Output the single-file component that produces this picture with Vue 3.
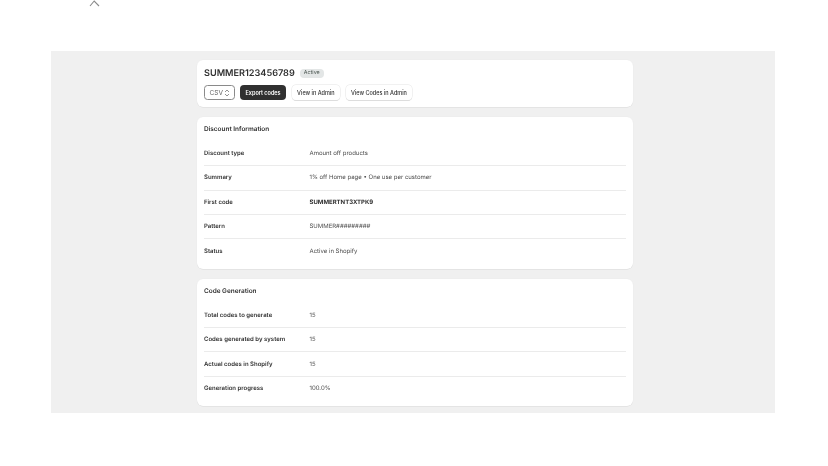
<template>
  <div class="page">
    <div class="topbar">
      <svg class="chevron" width="11" height="8" viewBox="0 0 11 8">
        <path d="M1 6 L5.2 1 L10 6" fill="none" stroke="#8a8a8a" stroke-width="1.1" />
      </svg>
    </div>
    <main class="content">
      <div class="column">
        <section class="card header-card">
          <div class="title-row">
            <h1 class="code">SUMMER123456789</h1>
            <span class="badge">Active</span>
          </div>
          <div class="actions">
            <button class="select">
              CSV
              <svg width="6" height="8" viewBox="0 0 6 8">
                <path d="M1 3 L3 1 L5 3 M1 5 L3 7 L5 5" fill="none" stroke="#616161" stroke-width="0.7" />
              </svg>
            </button>
            <button class="btn primary">Export codes</button>
            <button class="btn">View in Admin</button>
            <button class="btn">View Codes in Admin</button>
          </div>
        </section>

        <section v-for="card in cards" :key="card.title" class="card info-card">
          <h2 class="card-title">{{ card.title }}</h2>
          <div v-for="row in card.rows" :key="row.label" class="row">
            <span class="label">{{ row.label }}</span>
            <span class="value" :class="{ strong: row.strong }">{{ row.value }}</span>
          </div>
        </section>
      </div>
    </main>
  </div>
</template>

<script setup>
const cards = [
  {
    title: 'Discount Information',
    rows: [
      { label: 'Discount type', value: 'Amount off products' },
      { label: 'Summary', value: '1% off Home page • One use per customer' },
      { label: 'First code', value: 'SUMMERTNT3XTPK9', strong: true },
      { label: 'Pattern', value: 'SUMMER#########' },
      { label: 'Status', value: 'Active in Shopify' },
    ],
  },
  {
    title: 'Code Generation',
    rows: [
      { label: 'Total codes to generate', value: '15' },
      { label: 'Codes generated by system', value: '15' },
      { label: 'Actual codes in Shopify', value: '15' },
      { label: 'Generation progress', value: '100.0%' },
    ],
  },
]
</script>

<style>
html,
body {
  margin: 0;
  background: #fff;
}
</style>

<style scoped>
.page {
  width: 828px;
  height: 466px;
  overflow: hidden;
  font-family: Inter, 'Liberation Sans', sans-serif;
  color: #303030;
  text-rendering: geometricPrecision;
}

.topbar {
  height: 51px;
  padding-left: 89px;
}

.chevron {
  display: block;
}

.content {
  width: 724px;
  height: 362px;
  margin-left: 51px;
  padding-top: 9px;
  box-sizing: border-box;
  background: #f0f0f0;
}

.column {
  width: 436px;
  margin-left: 146px;
  display: flex;
  flex-direction: column;
  gap: 10px;
  will-change: transform;
}

.card {
  background: #fff;
  border-radius: 6px;
  box-shadow: 0 0.6px 0 #d9d9d9, 0 0 0 0.5px #ebebeb;
  padding: 0 7px;
}

.header-card {
  height: 47px;
  box-sizing: border-box;
  padding-top: 6.5px;
}

.title-row {
  display: flex;
  align-items: center;
  gap: 5px;
  height: 13px;
}

.code {
  margin: 0;
  font-size: 9.15px;
  line-height: 13px;
  font-weight: 600;
  color: #303030;
}

.badge {
  background: #e3e6e6;
  color: #4a5550;
  font-size: 5.4px;
  line-height: 9px;
  padding: 0 4px;
  border-radius: 4px;
}

.actions {
  display: flex;
  align-items: center;
  gap: 5.5px;
  margin-top: 5.5px;
}

.select {
  display: flex;
  align-items: center;
  gap: 1.5px;
  height: 15px;
  width: 30.5px;
  box-sizing: border-box;
  padding: 0 0 0 4.5px;
  background: #fff;
  border: 0.7px solid #8a8a8a;
  border-radius: 3.5px;
  font: 400 6.5px Inter, sans-serif;
  color: #616161;
}

.btn {
  height: 15px;
  padding: 0 5.5px;
  background: #fff;
  border: none;
  border-radius: 4px;
  box-shadow: 0 0 0 0.5px #e3e3e3, 0 0.7px 0 #c9c9c9;
  font: 500 5.5px Inter, sans-serif;
  color: #303030;
}

.btn.primary {
  background: #303030;
  color: #fff;
  font-weight: 600;
  box-shadow: none;
}

.info-card {
  padding-bottom: 5.3px;
}

.card-title {
  margin: 0;
  padding-top: 8px;
  height: 25px;
  box-sizing: border-box;
  font-size: 6.45px;
  line-height: 9px;
  font-weight: 600;
  color: #303030;
}

.row {
  display: flex;
  align-items: center;
  height: 24.3px;
  box-sizing: border-box;
  border-bottom: 0.6px solid #ebebeb;
  font-size: 6px;
}

.row:last-child {
  border-bottom: none;
}

.label {
  width: 105.5px;
  font-weight: 600;
}

.value {
  color: #4a4a4a;
}

.value.strong {
  color: #303030;
  font-weight: 700;
}
</style>
